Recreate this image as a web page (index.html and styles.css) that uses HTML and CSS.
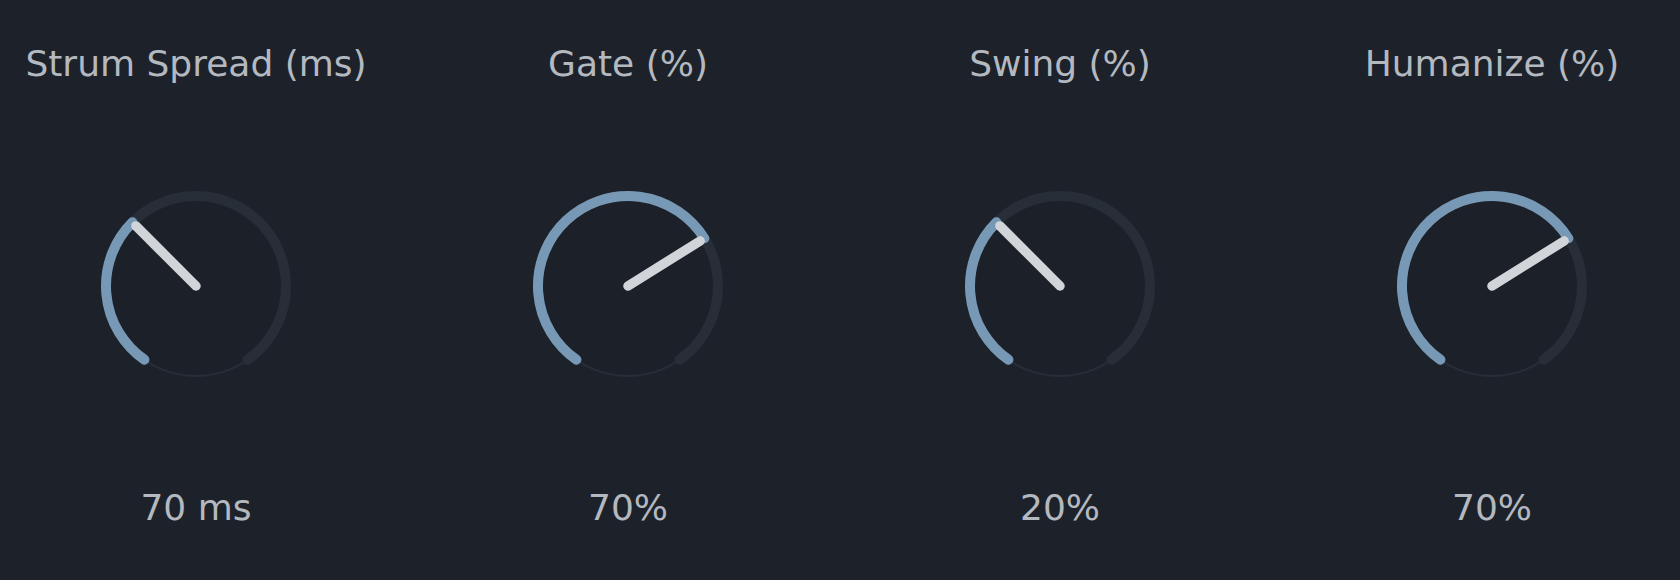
FILE: index.html
```html
<!DOCTYPE html>
<html lang="en">
<head>
    <meta charset="UTF-8">
    <title>Strum Settings</title>
    <link rel="stylesheet" href="styles.css">
</head>
<body>
    <div class="knobs" id="knobs"></div>

    <script>
        // Knob settings: angle is degrees from top, clockwise (-145 .. 145)
        const knobs = [
            { label: 'Strum Spread (ms)', value: '70 ms', angle: -45 },
            { label: 'Gate (%)', value: '70%', angle: 58 },
            { label: 'Swing (%)', value: '20%', angle: -45 },
            { label: 'Humanize (%)', value: '70%', angle: 58 }
        ];

        const R = 90;
        const C = 100;
        const MIN_ANGLE = -145;
        const MAX_ANGLE = 145;

        function point(angle, radius) {
            const rad = angle * Math.PI / 180;
            const x = C + radius * Math.sin(rad);
            const y = C - radius * Math.cos(rad);
            return x.toFixed(2) + ' ' + y.toFixed(2);
        }

        function arc(from, to) {
            const large = (to - from) > 180 ? 1 : 0;
            return 'M ' + point(from, R) + ' A ' + R + ' ' + R + ' 0 ' + large + ' 1 ' + point(to, R);
        }

        function buildKnob(knob) {
            const el = document.createElement('div');
            el.className = 'knob';
            el.innerHTML =
                '<div class="knob-label">' + knob.label + '</div>' +
                '<svg class="knob-dial" width="200" height="200" viewBox="0 0 200 200">' +
                    '<circle class="dial-body" cx="100" cy="100" r="' + R + '"></circle>' +
                    '<path class="dial-track" d="' + arc(MIN_ANGLE, MAX_ANGLE) + '"></path>' +
                    '<path class="dial-value" d="' + arc(MIN_ANGLE, knob.angle) + '"></path>' +
                    '<path class="dial-pointer" d="M 100 100 L ' + point(knob.angle, 85) + '"></path>' +
                '</svg>' +
                '<div class="knob-value">' + knob.value + '</div>';
            return el;
        }

        const container = document.getElementById('knobs');
        knobs.forEach(function(knob) {
            container.appendChild(buildKnob(knob));
        });
    </script>
</body>
</html>
```

FILE: styles.css
```css
body {
    margin: 0;
    background-color: #1d222a;
    font-family: 'DejaVu Sans', 'Liberation Sans', sans-serif;
    color: #b4b9c0;
}
.knobs {
    display: grid;
    grid-template-columns: repeat(4, 360px);
    column-gap: 72px;
    padding: 42px 0 0 16px;
}
.knob {
    display: flex;
    flex-direction: column;
    align-items: center;
}
.knob-label {
    font-size: 36px;
    line-height: 44px;
    white-space: nowrap;
}
.knob-dial {
    display: block;
    margin-top: 100px;
    border-radius: 50%;
    box-shadow: 0 0 24px rgba(255, 255, 255, 0.015);
}
.knob-value {
    font-size: 36px;
    line-height: 44px;
    margin-top: 100px;
}
.dial-body {
    fill: #1c2129;
    stroke: #272e37;
    stroke-width: 2;
}
.dial-track {
    fill: none;
    stroke: #272e37;
    stroke-width: 10;
    stroke-linecap: round;
}
.dial-value {
    fill: none;
    stroke: #7899b6;
    stroke-width: 10;
    stroke-linecap: round;
}
.dial-pointer {
    stroke: #d1d5da;
    stroke-width: 9.5;
    stroke-linecap: round;
}
```
